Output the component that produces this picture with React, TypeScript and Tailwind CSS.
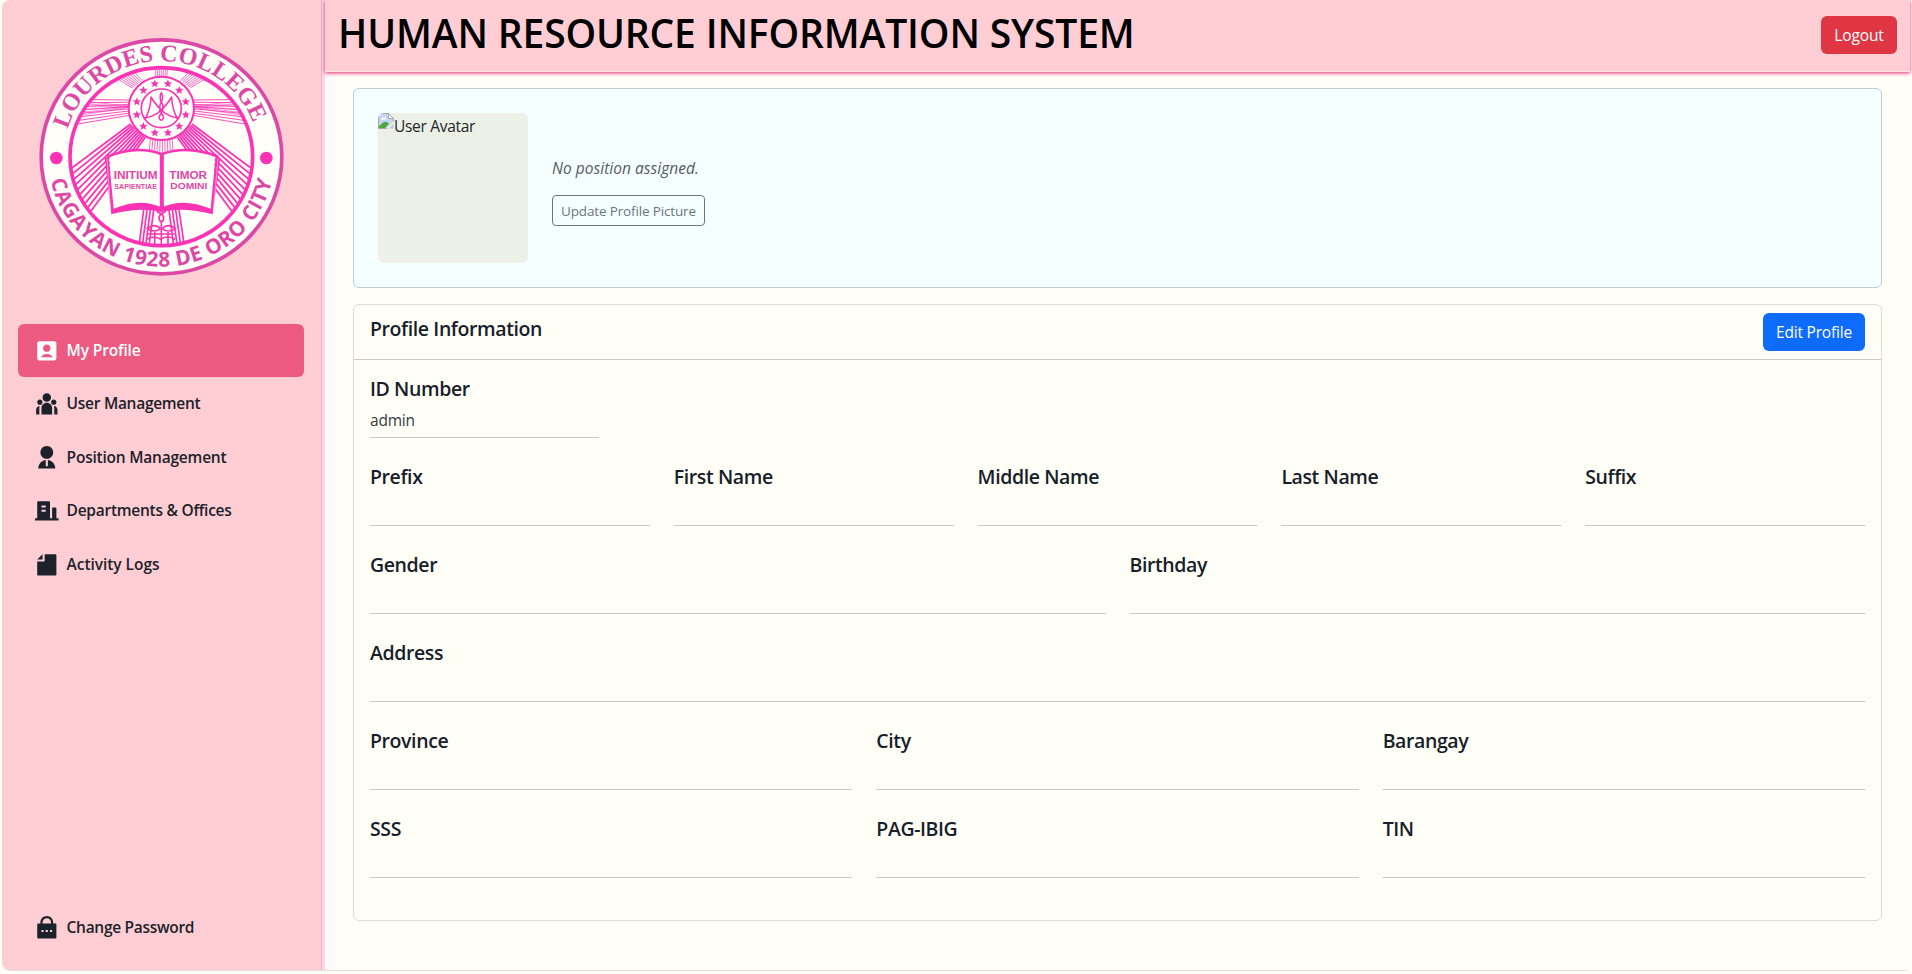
import type { ReactNode } from "react";
import { RiAccountBoxFill, RiBuildingFill, RiFile2Fill, RiLockPasswordFill, RiTeamFill, RiUser2Fill } from "react-icons/ri";

const PINK = "#fb33b4";
const ROSE = "#dd48a6";

type Pt = [number, number];

/* A fan of n lines from segment a-b to segment c-d. */
function Fan({ n, a, b, c, d, w }: { n: number; a: Pt; b: Pt; c: Pt; d: Pt; w: number }) {
  return (
    <g strokeWidth={w}>
      {Array.from({ length: n }, (_, i) => {
        const t = i / (n - 1);
        return (
          <line
            key={i}
            x1={a[0] + (b[0] - a[0]) * t}
            y1={a[1] + (b[1] - a[1]) * t}
            x2={c[0] + (d[0] - c[0]) * t}
            y2={c[1] + (d[1] - c[1]) * t}
          />
        );
      })}
    </g>
  );
}

function star(cx: number, cy: number, r: number) {
  return Array.from({ length: 10 }, (_, i) => {
    const rad = i % 2 ? r * 0.45 : r;
    const ang = (Math.PI / 5) * i - Math.PI / 2;
    return `${(cx + rad * Math.cos(ang)).toFixed(1)},${(cy + rad * Math.sin(ang)).toFixed(1)}`;
  }).join(" ");
}

function SideRays() {
  return (
    <g>
      <Fan n={8} a={[225, 298]} b={[215, 375]} c={[388, 300]} d={[388, 346]} w={2.6} />
      <Fan n={6} a={[215, 300]} b={[215, 350]} c={[388, 318]} d={[388, 322]} w={1.6} />
      <Fan n={8} a={[345, 232]} b={[398, 212]} c={[397, 264]} d={[427, 242]} w={2.2} />
      <Fan n={10} a={[205, 512]} b={[268, 640]} c={[392, 372]} d={[436, 412]} w={5.4} />
    </g>
  );
}

function Seal() {
  return (
    <svg className="h-[238px] w-[245px]" viewBox="117 114 735 714" preserveAspectRatio="none" role="img" aria-label="Lourdes College">
      <defs>
        <path id="arcTop" d="M203 388 A292 280 0 0 1 765 386" />
        <path id="arcBottom" d="M152 541 A340 330 0 0 0 817 537" />
        <clipPath id="disc">
          <ellipse cx="484" cy="470" rx="275" ry="268" />
        </clipPath>
      </defs>
      <ellipse cx="484.500" cy="470.500" rx="361" ry="351" fill="#fffef8" stroke={ROSE} strokeWidth="11" />
      <g clipPath="url(#disc)" stroke={PINK} fill="none">
        <SideRays />
        <g transform="translate(968 0) scale(-1 1)">
          <SideRays />
        </g>
        <Fan n={7} a={[464, 200]} b={[504, 200]} c={[468, 230]} d={[500, 230]} w={2} />
        <Fan n={10} a={[452, 412]} b={[516, 412]} c={[446, 466]} d={[520, 466]} w={2.2} />
        <Fan n={4} a={[432, 622]} b={[462, 622]} c={[416, 745]} d={[446, 745]} w={5} />
        <Fan n={4} a={[506, 622]} b={[536, 622]} c={[522, 745]} d={[554, 745]} w={5} />
        <path d="M470 634l14 8 14-8M484 640q-14 16 0 26q14-10 0-26ZM484 666V745" strokeWidth="5" />
        <path d="M442 686q20-18 40 0-20 14-40 0ZM486 686q20-18 40 0-20 14-40 0Z" strokeWidth="5" />
        <path d="M444 702h80M442 718q20-14 40 0 20-14 44 0M464 696v46M504 696v46" strokeWidth="5" />
      </g>
      <ellipse cx="484" cy="470" rx="274" ry="267" fill="none" stroke={PINK} strokeWidth="11" />
      <circle cx="169" cy="474" r="19" fill={PINK} />
      <circle cx="799" cy="474" r="19" fill={PINK} />

      <ellipse cx="484" cy="325" rx="98" ry="95" fill="#fffef8" stroke={PINK} strokeWidth="6" />
      <ellipse cx="484" cy="325" rx="60" ry="58" fill="none" stroke={PINK} strokeWidth="5" />
      {Array.from({ length: 12 }, (_, i) => {
        const ang = ((i * 30 + 15) * Math.PI) / 180;
        return <polygon key={i} points={star(484 + 76 * Math.cos(ang), 325 + 76 * Math.sin(ang), 13)} fill={PINK} />;
      })}
      <g fill="none" stroke={PINK} strokeWidth="4.500" strokeLinecap="round" strokeLinejoin="round">
        <path d="M436 356Q452 326 453 291Q470 320 496 340Q512 350 534 354" />
        <path d="M532 356Q516 326 515 291Q498 320 472 340Q456 350 434 354" />
        <path d="M484 278q-7 12 0 30q7-18 0-30ZM484 306q-10 16 0 34q10-18 0-34ZM484 340q-11 12-3 20h6q8-8-3-20Z" />
      </g>

      <path d="M328 466Q400 436 484 462Q560 436 645 464L638 632Q548 590 484 620Q420 590 337 632Z" fill="#fffef8" />
      <path d="M314 473L326 470L341 626Q420 592 485 622Q550 592 632 626L647 468L661 474L638 643Q550 620 485 636Q420 620 334 643Z" fill={PINK} />
      <path d="M321 476L332 632M654 476L640 632" stroke="#fffef8" strokeWidth="1.500" />
      <path d="M322 470Q412 434 485 463Q560 434 655 470" fill="none" stroke={PINK} strokeWidth="8" />
      <path d="M485.500 460V630" stroke={PINK} strokeWidth="12" />

      <g fill={ROSE} fontFamily="Liberation Sans, Arial, sans-serif" fontWeight="700">
        <text x="341" y="536" fontSize="31" textLength="132" lengthAdjust="spacingAndGlyphs">INITIUM</text>
        <text x="343" y="567" fontSize="23" textLength="128" lengthAdjust="spacingAndGlyphs">SAPIENTIAE</text>
        <text x="508" y="536" fontSize="31" textLength="113" lengthAdjust="spacingAndGlyphs">TIMOR</text>
        <text x="511" y="568" fontSize="27" textLength="111" lengthAdjust="spacingAndGlyphs">DOMINI</text>
      </g>
      <text fill={ROSE} fontFamily="Liberation Serif, Times New Roman, serif" fontSize="72" fontWeight="700">
        <textPath href="#arcTop" textLength="726">LOURDES COLLEGE</textPath>
      </text>
      <text fill={ROSE} fontFamily="Open Sans, Verdana, sans-serif" fontSize="62" fontWeight="700">
        <textPath href="#arcBottom" textLength="908">CAGAYAN 1928 DE ORO CITY</textPath>
      </text>
    </svg>
  );
}

function NavItem({ icon, label, track, active }: { icon: ReactNode; label: string; track: string; active?: boolean }) {
  return (
    <a
      className={`flex h-[53px] items-center gap-[7px] rounded-md px-4 font-semibold ${track} ${
        active ? "bg-[#ec5a81] text-white" : "text-[#1b2229]"
      }`}
    >
      <span className="text-[25.600px]">{icon}</span>
      <span className="whitespace-nowrap text-[15.500px]">{label}</span>
    </a>
  );
}

function Field({ label, value }: { label: string; value?: string }) {
  return (
    <div className="flex h-[72px] flex-col border-b border-[#c9cac5]">
      <h5 className="mt-[11px] text-[19.500px] leading-6 font-semibold tracking-[-0.400px] text-[#17202a]">{label}</h5>
      <p className="mt-[7px] text-[15.500px] leading-6 tracking-[-0.200px] text-[#343a40]">{value}</p>
    </div>
  );
}

function BrokenImage() {
  return (
    <svg className="size-4 shrink-0" viewBox="0 0 16 16">
      <path d="M.5 15.500V.5h10l5 5v4l-6 6Z" fill="#c5d5f4" stroke="#a3a8ad" />
      <path d="M10.500.5v5h5Z" fill="#fff" stroke="#a3a8ad" />
      <path d="M3 6.500q0-2 2-2 3-1 3.500 2Z" fill="#fff" />
      <path d="M1 15v-2l5-4q3-1 5 2l-4 4Z" fill="#4ea83e" />
      <path d="M8 15.500 16 8v7.500Z" fill="#edf0e6" />
      <path d="m11 15.500 4.500-4.500v4.500Z" fill="#b9c8e6" />
    </svg>
  );
}

export default function App() {
  return (
    <div className="h-[974px] w-[1912px] overflow-hidden bg-[#fffff8] pl-[2px] font-['Open_Sans','Noto_Sans',sans-serif] text-[#212529]">
      <div className="flex h-[971px] rounded-lg border-b border-[#dfe0da]">
        <aside className="flex w-[320px] shrink-0 flex-col rounded-l-lg border-r border-[#f3b5cb] bg-[#ffced5] px-4">
          <div className="flex justify-center pt-[38px]">
            <Seal />
          </div>
          <nav className="mt-12 flex w-[286px] flex-col gap-[0.500px]">
            <NavItem active icon={<RiAccountBoxFill />} label="My Profile" track="tracking-[-0.150px]" />
            <NavItem icon={<RiTeamFill />} label="User Management" track="tracking-[-0.280px]" />
            <NavItem icon={<RiUser2Fill />} label="Position Management" track="tracking-[-0.220px]" />
            <NavItem icon={<RiBuildingFill />} label="Departments & Offices" track="tracking-[-0.260px]" />
            <NavItem icon={<RiFile2Fill />} label="Activity Logs" track="tracking-[-0.050px]" />
          </nav>
          <div className="mt-auto mb-4">
            <NavItem icon={<RiLockPasswordFill />} label="Change Password" track="tracking-[-0.300px]" />
          </div>
        </aside>
        <div className="w-[3px] shrink-0 bg-[#fbd6e3]" />
        <main className="flex min-w-0 flex-1 flex-col bg-linear-to-r from-[#fdf6ff] to-[#fffff8] to-[12px]">
          <header className="mr-[2px] flex h-[72px] shrink-0 items-start justify-between border-b border-[#fbe3ea] bg-[#ffced5] pr-[13px] pl-[13px] shadow-[0_1px_4px_#e0206f]">
            <h1 className="mt-[9px] text-[39px] leading-[48px] font-semibold tracking-[-0.150px] whitespace-nowrap text-black">
              HUMAN RESOURCE INFORMATION SYSTEM
            </h1>
            <button className="mt-4 h-[38px] w-[76px] rounded-md bg-[#e03543] pt-[2px] text-[15.500px] tracking-[-0.100px] text-white">Logout</button>
          </header>
          <div className="flex flex-col gap-4 px-7 pt-4">
            <section className="flex h-[200px] w-[1529px] gap-6 rounded-md border border-[#bccfd0] bg-[#f5ffff] p-6">
              <div className="flex size-[150px] items-start overflow-hidden rounded-md bg-[#edf0e6]">
                <BrokenImage />
                <span className="pt-px text-[15.500px] leading-6 tracking-[-0.300px]">User Avatar</span>
              </div>
              <div className="flex flex-col items-start pt-[43px]">
                <p className="text-[15.500px] leading-6 tracking-[0.030px] text-[#565c61] italic">No position assigned.</p>
                <button className="mt-[15px] h-[31px] w-[153px] rounded-sm border border-[#6c757d] pt-px text-[13.500px] tracking-[-0.150px] whitespace-nowrap text-[#6c757d]">
                  Update Profile Picture
                </button>
              </div>
            </section>
            <section className="h-[617px] w-[1529px] rounded-md border border-[#dcddd7]">
              <div className="flex h-[55px] items-start justify-between border-b border-[#c9cac5] px-4 pt-2">
                <h5 className="mt-1 text-[19.500px] leading-6 font-semibold tracking-[-0.400px] text-[#17202a]">Profile Information</h5>
                <button className="h-[38px] w-[102px] rounded-md bg-[#0d6bfd] pt-[2px] text-[15.500px] tracking-[-0.200px] text-white">Edit Profile</button>
              </div>
              <div className="flex flex-col gap-4 px-4 pt-[6px]">
                <div className="w-[229px]">
                  <Field label="ID Number" value="admin" />
                </div>
                <div className="grid grid-cols-5 gap-6">
                  <Field label="Prefix" />
                  <Field label="First Name" />
                  <Field label="Middle Name" />
                  <Field label="Last Name" />
                  <Field label="Suffix" />
                </div>
                <div className="grid grid-cols-2 gap-6">
                  <Field label="Gender" />
                  <Field label="Birthday" />
                </div>
                <Field label="Address" />
                <div className="grid grid-cols-3 gap-6">
                  <Field label="Province" />
                  <Field label="City" />
                  <Field label="Barangay" />
                </div>
                <div className="grid grid-cols-3 gap-6">
                  <Field label="SSS" />
                  <Field label="PAG-IBIG" />
                  <Field label="TIN" />
                </div>
              </div>
            </section>
          </div>
        </main>
      </div>
    </div>
  );
}
